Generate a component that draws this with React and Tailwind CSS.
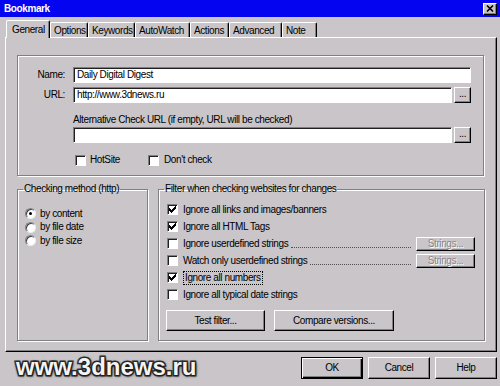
import clsx from "clsx";

const sunken =
  "bg-white border border-t-[#808080] border-l-[#808080] border-r-white border-b-white shadow-[inset_1px_1px_0_#202020]";
const raised =
  "bg-[#c9c5c9] border border-t-white border-l-white border-r-black border-b-black shadow-[inset_-1px_-1px_0_#808080]";
const etched = "border border-[#808080] shadow-[inset_1px_1px_0_#fff,1px_1px_0_#fff]";

const tabs = [
  { label: "Options", w: "w-[38px]" },
  { label: "Keywords", w: "w-[47px]" },
  { label: "AutoWatch", w: "w-[55px]" },
  { label: "Actions", w: "w-[39px]" },
  { label: "Advanced", w: "w-[53px]" },
  { label: "Note", w: "w-[35px]" },
];

function CheckMark() {
  const cols = [2, 3, 4, 3, 2, 1, 0];
  return (
    <svg className="absolute left-[1px] top-[1px]" width="7" height="7" viewBox="0 0 7 7" shapeRendering="crispEdges">
      {cols.map((top, i) => (
        <rect key={i} x={i} y={top} width="1" height="3" fill="#000" />
      ))}
    </svg>
  );
}

function Check({ checked }) {
  return (
    <span className={clsx("relative inline-block h-[11px] w-[11px] shrink-0", sunken)}>
      {checked && <CheckMark />}
    </span>
  );
}

function Radio({ on, label }) {
  return (
    <div className="flex h-[13.5px] items-center pl-[7px]">
      <span className="relative h-[11px] w-[11px] shrink-0 rounded-full bg-white border border-t-[#808080] border-l-[#808080] border-r-[#eeeeee] border-b-[#eeeeee] shadow-[inset_1px_1px_0_#404040]">
        {on && <span className="absolute left-[3px] top-[3px] h-[3px] w-[3px] rounded-full bg-black" />}
      </span>
      <span className="ml-[4px]">{label}</span>
    </div>
  );
}

function FilterRow({ checked, label, strings, focus }) {
  return (
    <div className="flex h-[17px] items-center pl-[8px] pr-[9px]">
      <Check checked={checked} />
      <span className={clsx("ml-[5px]", focus && "border border-dotted border-black px-px -ml-px")}>{label}</span>
      {strings && (
        <>
          <span className="ml-[3px] mr-[5px] mt-[7px] flex-1 border-b border-dotted border-[#505050]" />
          <div className={clsx("flex h-[14px] w-[59px] items-center justify-center text-[#8a868a] [text-shadow:1px_1px_0_#fff]", raised)}>
            Strings...
          </div>
        </>
      )}
    </div>
  );
}

export default function App() {
  return (
    <div className="flex h-[386px] w-[500px] flex-col overflow-hidden bg-[#c9c5c9] font-['Liberation_Sans',Arial,sans-serif] text-[10px] leading-[12px] tracking-[-0.4px] text-black">
      <div className="flex h-[17px] items-center justify-between bg-[#0404f0] pl-[4px] pr-[3px]">
        <span className="font-bold text-white">Bookmark</span>
        <div className={clsx("flex h-[12px] w-[14px] items-center justify-center", raised)}>
          <svg width="8" height="7" viewBox="0 0 8 7">
            <path d="M1 0.5 L7 6.5 M7 0.5 L1 6.5" stroke="#000" strokeWidth="1.6" fill="none" />
          </svg>
        </div>
      </div>

      <div className="relative z-10 ml-[5px] mt-[3px] flex h-[17px] items-end">
        <div className="-mb-px ml-[1px] flex h-[18px] w-[44px] items-center rounded-t-[2px] border-l border-t border-r border-l-white border-t-white border-r-black bg-[#c9c5c9] pl-[5px] shadow-[inset_-1px_0_0_#808080]">
          General
        </div>
        {tabs.map((tab) => (
          <div
            key={tab.label}
            className={clsx(
              "flex h-[15px] items-center rounded-t-[2px] border-l border-t border-r border-l-white border-t-white border-r-black pl-[3px] pt-[2px] shadow-[inset_-1px_0_0_#808080]",
              tab.w
            )}
          >
            {tab.label}
          </div>
        ))}
      </div>

      <div className="ml-[5px] flex h-[315px] w-[492px] flex-col border border-l-white border-t-white border-r-black border-b-black pl-[11px] pt-[17px] shadow-[inset_-1px_-1px_0_#808080]">
        <div className={clsx("flex h-[121px] w-[467px] flex-col pt-[11px]", etched)}>
          <div className="flex items-center">
            <span className="w-[47px] text-right">Name:</span>
            <div className={clsx("ml-[8px] flex h-[16px] w-[398px] items-center px-[3px]", sunken)}>Daily Digital Digest</div>
          </div>
          <div className="mt-[4px] flex items-center">
            <span className="w-[47px] text-right">URL:</span>
            <div className={clsx("ml-[8px] flex h-[16px] w-[379px] items-center px-[3px]", sunken)}>http://www.3dnews.ru</div>
            <div className={clsx("ml-[2px] flex h-[16px] w-[17px] items-center justify-center pb-[2px]", raised)}>...</div>
          </div>
          <div className="ml-[55px] mt-[11px] h-[13px]">Alternative Check URL (if empty, URL will be checked)</div>
          <div className="ml-[55px] flex items-center">
            <div className={clsx("h-[16px] w-[379px]", sunken)} />
            <div className={clsx("ml-[2px] flex h-[16px] w-[17px] items-center justify-center pb-[2px]", raised)}>...</div>
          </div>
          <div className="ml-[57px] mt-[11px] flex h-[12px] items-center">
            <div className="flex w-[73px] items-center">
              <Check />
              <span className="ml-[4px]">HotSite</span>
            </div>
            <Check />
            <span className="ml-[5px]">Don't check</span>
          </div>
        </div>

        <div className="mt-[7px] flex gap-[10px]">
          <fieldset className={clsx("h-[158px] w-[131px]", etched)}>
            <legend className="ml-[5px] px-px">Checking method (http)</legend>
            <div className="pt-[12px]">
              <Radio on label="by content" />
              <Radio label="by file date" />
              <Radio label="by file size" />
            </div>
          </fieldset>
          <fieldset className={clsx("h-[158px] w-[327px]", etched)}>
            <legend className="ml-[5px] px-px">Filter when checking websites for changes</legend>
            <div className="pt-[6px]">
              <FilterRow checked label="Ignore all links and images/banners" />
              <FilterRow checked label="Ignore all HTML Tags" />
              <FilterRow label="Ignore userdefined strings" strings />
              <FilterRow label="Watch only userdefined strings" strings />
              <FilterRow checked label="Ignore all numbers" focus />
              <FilterRow label="Ignore all typical date strings" />
              <div className="ml-[7px] mt-[7px] flex gap-[9px]">
                <div className={clsx("flex h-[21px] w-[99px] items-center justify-center", raised)}>Test filter...</div>
                <div className={clsx("flex h-[21px] w-[120px] items-center justify-center", raised)}>Compare versions...</div>
              </div>
            </div>
          </fieldset>
        </div>
      </div>

      <div className="mt-[5px] flex items-center justify-between pl-[16px] pr-[3px]">
        <span className="-mt-[2px] text-[24px] font-black leading-[24px] tracking-[0px] text-[#f4f4f4] [-webkit-text-stroke:3px_#3a3a3a] [paint-order:stroke_fill] [text-shadow:0_0_3px_#000,1px_1px_3px_#222]">
          www.3dnews.ru
        </span>
        <div className="flex gap-[5px]">
          <div className="flex h-[22px] w-[62px] items-center justify-center border border-black bg-[#c9c5c9] shadow-[inset_1px_1px_0_#fff,inset_-1px_-1px_0_#000,inset_-2px_-2px_0_#808080]">
            OK
          </div>
          <div className={clsx("flex h-[22px] w-[62px] items-center justify-center", raised)}>Cancel</div>
          <div className={clsx("flex h-[22px] w-[62px] items-center justify-center", raised)}>Help</div>
        </div>
      </div>
    </div>
  );
}
